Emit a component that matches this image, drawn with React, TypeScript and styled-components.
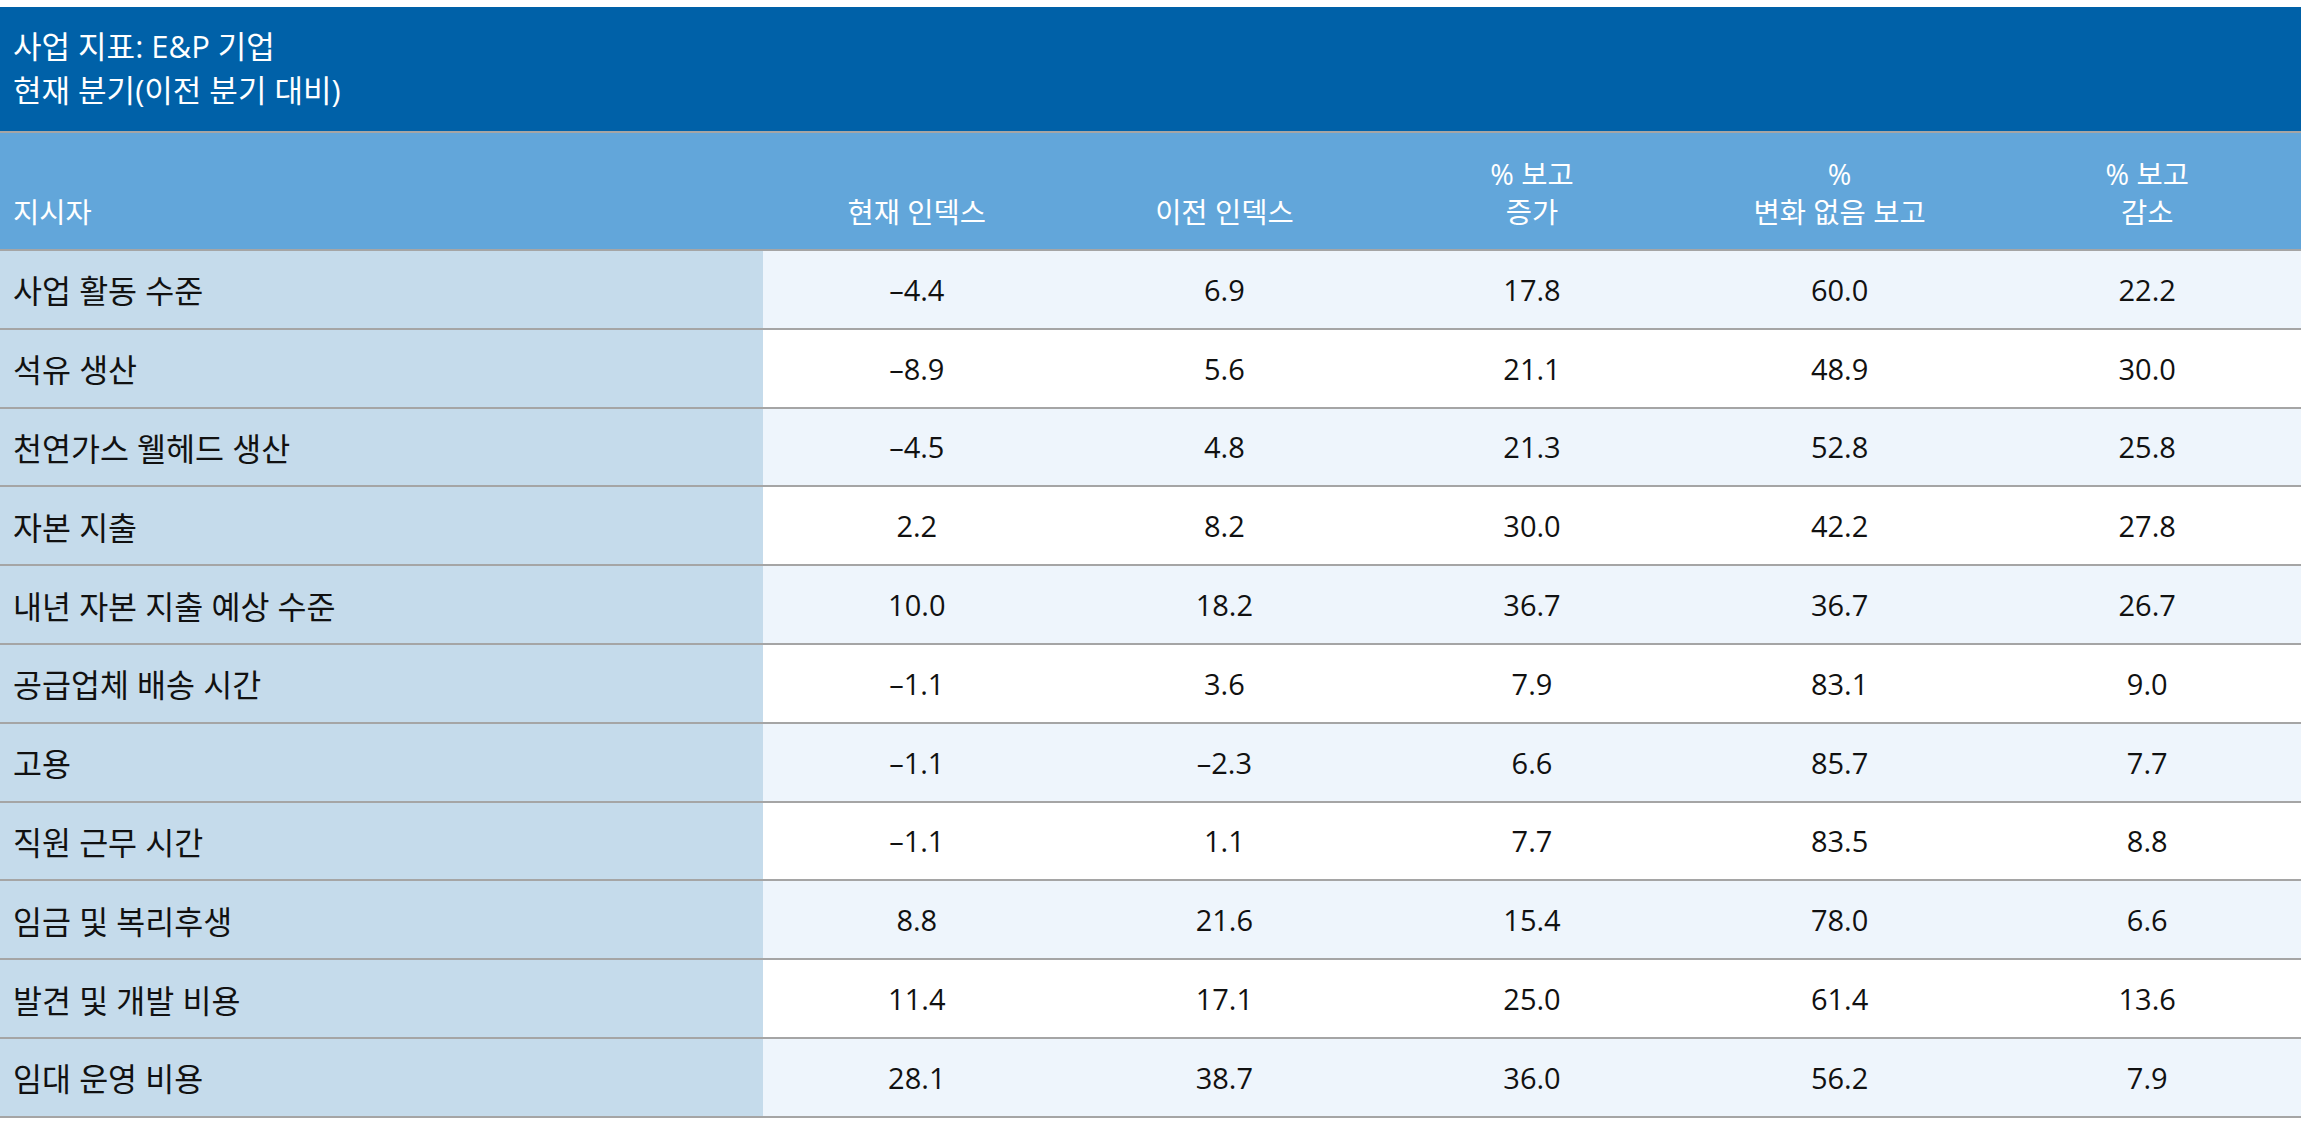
import React from "react";
import styled, { createGlobalStyle } from "styled-components";

const GlobalStyle = createGlobalStyle`
  html, body { margin: 0; padding: 0; background: #ffffff; }
  body {
    font-family: "Open Sans", "Noto Sans CJK KR", sans-serif;
    color: #000;
  }
`;

const Page = styled.div`
  padding-top: 7px;
`;

const Table = styled.div`
  width: 100%;
  display: flex;
  flex-direction: column;
`;

const TitleBlock = styled.div`
  background: #0061a8;
  color: #ffffff;
  height: 126px;
  box-sizing: border-box;
  border-bottom: 2px solid #a5a5a5;
  padding: 17px 13px 0 13px;
  font-size: 31px;
  line-height: 44px;
`;

const TitleLine = styled.div``;

const Columns = "763px repeat(5, 1fr)";

const HeaderRow = styled.div`
  display: grid;
  grid-template-columns: ${Columns};
  height: 118px;
  box-sizing: border-box;
  background: #62a6da;
  border-bottom: 2px solid #a5a5a5;
  color: #ffffff;
  font-size: 28.5px;
  line-height: 38px;
`;

const HeaderCell = styled.div<{ $left?: boolean }>`
  display: flex;
  flex-direction: column;
  justify-content: flex-end;
  align-items: ${(p) => (p.$left ? "flex-start" : "center")};
  text-align: ${(p) => (p.$left ? "left" : "center")};
  padding: 0 ${(p) => (p.$left ? "13px" : "0")} 18px;
`;

const BodyRow = styled.div<{ $alt: boolean }>`
  display: grid;
  grid-template-columns: ${Columns};
  height: 78.8px;
  box-sizing: border-box;
  border-bottom: 2px solid #a5a5a5;
  background: ${(p) => (p.$alt ? "#eef5fc" : "#ffffff")};
  font-size: 29px;
`;

const LabelCell = styled.div`
  display: flex;
  align-items: center;
  background: #c5dbeb;
  padding-left: 13px;
  color: #111;
  font-size: 31.5px;
`;

const ValueCell = styled.div`
  display: flex;
  align-items: center;
  justify-content: center;
  color: #111;
`;

type Row = [string, string, string, string, string, string];

const rows: Row[] = [
  ["사업 활동 수준", "–4.4", "6.9", "17.8", "60.0", "22.2"],
  ["석유 생산", "–8.9", "5.6", "21.1", "48.9", "30.0"],
  ["천연가스 웰헤드 생산", "–4.5", "4.8", "21.3", "52.8", "25.8"],
  ["자본 지출", "2.2", "8.2", "30.0", "42.2", "27.8"],
  ["내년 자본 지출 예상 수준", "10.0", "18.2", "36.7", "36.7", "26.7"],
  ["공급업체 배송 시간", "–1.1", "3.6", "7.9", "83.1", "9.0"],
  ["고용", "–1.1", "–2.3", "6.6", "85.7", "7.7"],
  ["직원 근무 시간", "–1.1", "1.1", "7.7", "83.5", "8.8"],
  ["임금 및 복리후생", "8.8", "21.6", "15.4", "78.0", "6.6"],
  ["발견 및 개발 비용", "11.4", "17.1", "25.0", "61.4", "13.6"],
  ["임대 운영 비용", "28.1", "38.7", "36.0", "56.2", "7.9"],
];

const headers: string[][] = [
  ["현재 인덱스"],
  ["이전 인덱스"],
  ["% 보고", "증가"],
  ["%", "변화 없음 보고"],
  ["% 보고", "감소"],
];

export default function App() {
  return (
    <Page>
      <GlobalStyle />
      <Table>
        <TitleBlock>
          <TitleLine>사업 지표: E&amp;P 기업</TitleLine>
          <TitleLine>현재 분기(이전 분기 대비)</TitleLine>
        </TitleBlock>
        <HeaderRow>
          <HeaderCell $left>지시자</HeaderCell>
          {headers.map((lines, i) => (
            <HeaderCell key={i}>
              {lines.map((l, j) => (
                <div key={j}>{l}</div>
              ))}
            </HeaderCell>
          ))}
        </HeaderRow>
        {rows.map((r, i) => (
          <BodyRow key={i} $alt={i % 2 === 0}>
            <LabelCell>{r[0]}</LabelCell>
            {r.slice(1).map((v, j) => (
              <ValueCell key={j}>{v}</ValueCell>
            ))}
          </BodyRow>
        ))}
      </Table>
    </Page>
  );
}
